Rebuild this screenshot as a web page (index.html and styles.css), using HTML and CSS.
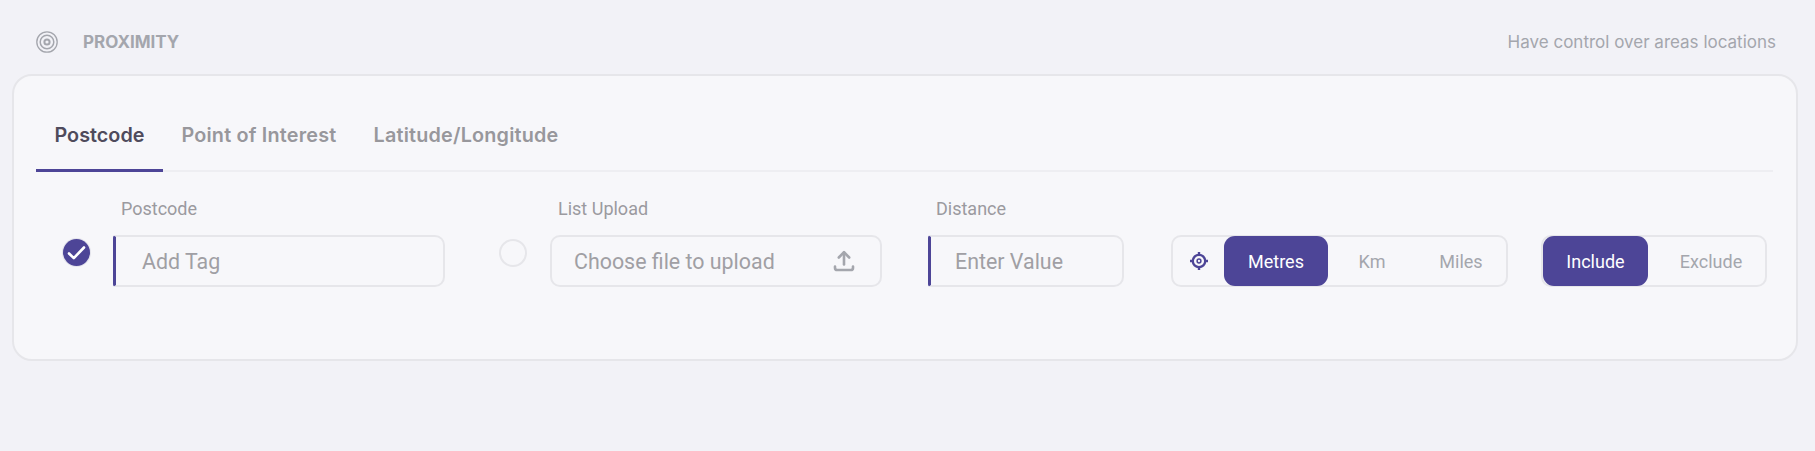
FILE: index.html
```html
<!DOCTYPE html>
<html lang="en">
<head>
  <meta charset="UTF-8">
  <title>Proximity</title>
  <link rel="stylesheet" href="styles.css">
</head>
<body>
  <!-- Section header -->
  <div class="section-head">
    <div class="section-title">
      <svg class="section-icon" viewBox="0 0 22 22" fill="none" stroke="#a4a6ad">
        <circle cx="11" cy="11" r="10.2" stroke-width="1.3"/>
        <circle cx="11" cy="11" r="6.8" stroke-width="1.5"/>
        <circle cx="11" cy="11" r="2.6" stroke-width="2"/>
      </svg>
      <span>PROXIMITY</span>
    </div>
    <div class="section-note">Have control over areas locations</div>
  </div>

  <div class="card">
    <!-- Tabs -->
    <div class="tabs">
      <div class="tab active">Postcode</div>
      <div class="tab">Point of Interest</div>
      <div class="tab">Latitude/Longitude</div>
    </div>

    <!-- Form row -->
    <div class="form-row">
      <div class="option option-postcode">
        <div class="check">
          <svg viewBox="0 0 27 27" fill="none">
            <path d="M6 14.5l4.8 4.6L21 8.5" stroke="#fff" stroke-width="2.6" stroke-linecap="round" stroke-linejoin="round"/>
          </svg>
        </div>
        <div class="field field-wide">
          <div class="field-label">Postcode</div>
          <div class="input input-marked">Add Tag</div>
        </div>
      </div>

      <div class="option option-upload">
        <div class="radio"></div>
        <div class="field field-wide">
          <div class="field-label">List Upload</div>
          <div class="input input-file">
            <span>Choose file to upload</span>
            <svg class="upload-icon" viewBox="0 0 22 22" fill="none" stroke="#a4a6ad" stroke-width="2.6" stroke-linecap="round" stroke-linejoin="round">
              <path d="M11 14.5V2.5"/>
              <path d="M5.8 7.5L11 2.2l5.2 5.3"/>
              <path d="M2 16.5v1.4c0 1.3.9 2.1 2.2 2.1h13.6c1.3 0 2.2-.8 2.2-2.1v-1.4"/>
            </svg>
          </div>
        </div>
      </div>

      <div class="field field-distance">
        <div class="field-label">Distance</div>
        <div class="input input-marked input-value">Enter Value</div>
      </div>

      <div class="segments segments-unit">
        <div class="segment-icon">
          <svg viewBox="0 0 20 20" fill="none" stroke="#4d4597">
            <circle cx="10" cy="10" r="6.2" stroke-width="2.3"/>
            <circle cx="10" cy="10" r="1.9" stroke-width="1.5"/>
            <path d="M10 1v3M10 16v3M1 10h3M16 10h3" stroke-width="2.4"/>
          </svg>
        </div>
        <div class="segment active seg-metres">Metres</div>
        <div class="segment seg-km">Km</div>
        <div class="segment seg-miles">Miles</div>
      </div>

      <div class="segments segments-mode">
        <div class="segment active seg-include">Include</div>
        <div class="segment seg-exclude">Exclude</div>
      </div>
    </div>
  </div>
</body>
</html>
```

FILE: styles.css
```css
html, body {
  margin: 0;
  padding: 0;
  height: 100%;
}

body {
  background-color: #f2f2f7;
  font-family: Roboto, sans-serif;
  padding: 0 17px 0 12px;
  box-sizing: border-box;
  overflow: hidden;
}

.section-head {
  height: 74px;
  display: flex;
  align-items: center;
  justify-content: space-between;
  padding: 10px 22px 0 24px;
  box-sizing: border-box;
  font-family: Inter, sans-serif;
  color: #a4a6ad;
}

.section-title {
  display: flex;
  align-items: center;
  gap: 25px;
  font-size: 17px;
  font-weight: 700;
}

.section-icon {
  width: 22px;
  height: 22px;
}

.section-note {
  font-size: 17px;
}

.card {
  height: 287px;
  box-sizing: border-box;
  background-color: #f7f7fa;
  border: 2px solid #e6e6ea;
  border-radius: 20px;
  padding: 0 23px 0 22px;
}

.tabs {
  display: flex;
  padding-top: 35px;
  border-bottom: 2px solid #eeeef2;
  font-family: Inter, sans-serif;
  font-size: 19.8px;
  font-weight: 600;
  color: #98979c;
  letter-spacing: 0.2px;
}

.tab {
  height: 61px;
  line-height: 49px;
  padding: 0 18.5px;
  margin-bottom: -2px;
  box-sizing: content-box;
}

.tab.active {
  color: #4f4b5c;
  letter-spacing: 0;
  box-shadow: inset 0 -3px 0 #4d4597;
}

.form-row {
  display: flex;
  align-items: flex-end;
  padding: 0 0 0 27px;
  margin-top: 27px;
}

.option {
  display: flex;
  align-items: flex-end;
  gap: 23px;
}

.option-upload {
  margin-left: 54px;
}

.check {
  width: 27px;
  height: 27px;
  margin-bottom: 21px;
  border-radius: 50%;
  background-color: #4d4597;
  box-shadow: 0 0 0 1px #e4e4ec;
}

.check svg {
  display: block;
}

.radio {
  width: 28px;
  height: 28px;
  margin-bottom: 20px;
  box-sizing: border-box;
  border: 2px solid #e6e6ea;
  border-radius: 50%;
}

.field-wide {
  width: 332px;
}

.field-distance {
  width: 196px;
  margin-left: 46px;
}

.field-label {
  font-size: 18px;
  line-height: 20px;
  color: #9b9a9f;
  padding-left: 8px;
  margin-bottom: 16px;
}

.input {
  height: 52px;
  box-sizing: border-box;
  border: 2px solid #e6e6ea;
  border-radius: 10px;
  display: flex;
  align-items: center;
  padding-left: 22px;
  font-size: 21.4px;
  color: #a09fa4;
}

.input-marked {
  border-left: 3px solid #4d4597;
  border-radius: 3px 10px 10px 3px;
  padding-left: 26px;
}

.input-value {
  padding-left: 24px;
}

.input-file {
  justify-content: space-between;
  padding-right: 25px;
}

.upload-icon {
  width: 22px;
  height: 22px;
}

.segments {
  height: 52px;
  box-sizing: border-box;
  border: 2px solid #e6e6ea;
  border-radius: 10px;
  display: flex;
  align-items: stretch;
  font-size: 18px;
  color: #a4a6ad;
}

.segments-unit {
  width: 337px;
  margin-left: 47px;
}

.segments-mode {
  width: 226px;
  margin-left: 33px;
}

.segment-icon {
  width: 51px;
  display: flex;
  align-items: center;
  justify-content: center;
}

.segment-icon svg {
  width: 20px;
  height: 20px;
}

.segment {
  display: flex;
  align-items: center;
  justify-content: center;
}

.segment.active {
  background-color: #4d4597;
  color: #fff;
  border-radius: 11px;
  margin: -1px 0;
}

.seg-metres {
  width: 104px;
}

.seg-km {
  width: 88px;
}

.seg-miles {
  flex: 1;
}

.seg-include {
  width: 105px;
}

.seg-exclude {
  flex: 1;
  padding-left: 9px;
}
```
